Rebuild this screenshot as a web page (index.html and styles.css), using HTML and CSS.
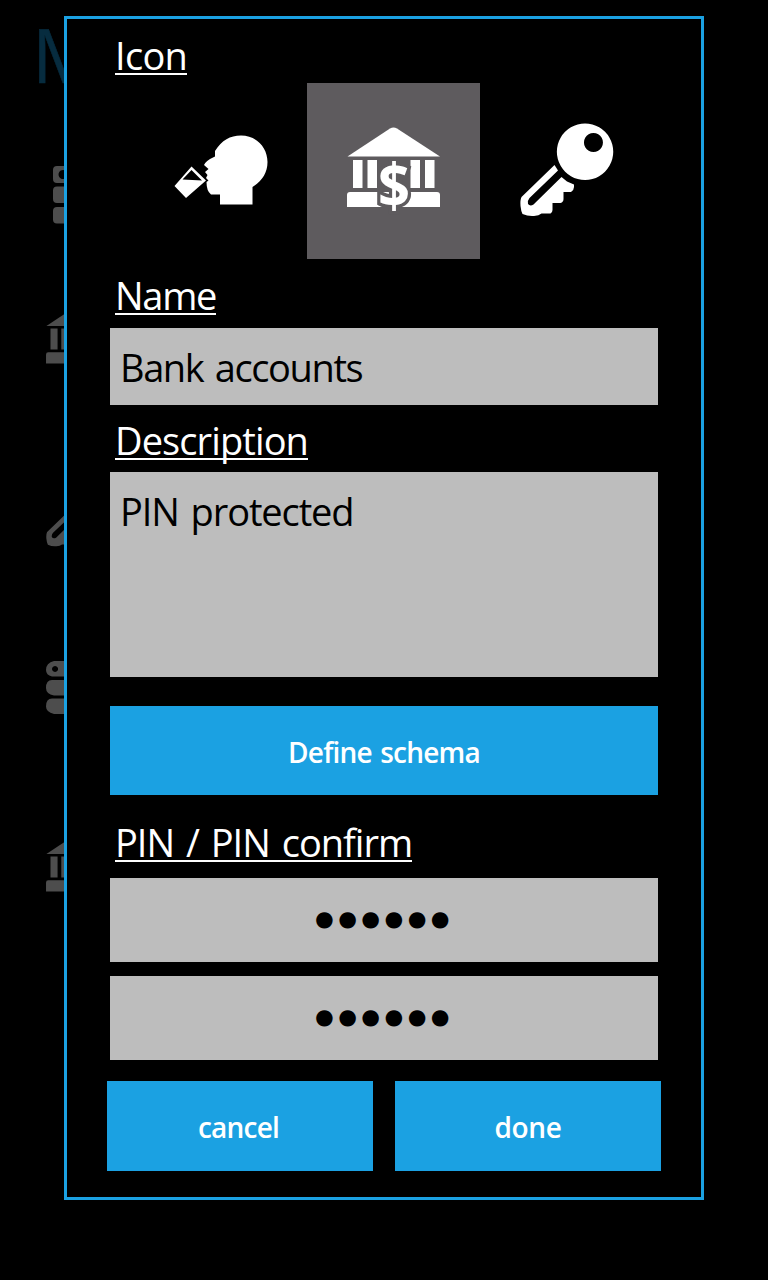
FILE: index.html
```html
<!DOCTYPE html>
<html lang="en">

<head>
    <meta charset="utf-8">
    <title>Edit category</title>
    <link rel="stylesheet" href="styles.css">
</head>

<body>

<!-- shapes used by the list and by the dialog -->
<svg class="defs" width="0" height="0">
    <symbol id="bank" viewBox="0 0 94 86">
        <path d="M.5 29.5 L43 1.5 Q46.500 -.5 50 1.500 L93 29.500 Z"/>
        <path d="M6 33h9.500v28H6z M20.500 33H30v28h-9.500z M63.500 33H73v28h-9.500z M78 33h9.500v28H78z"/>
        <path d="M0 80 V68 Q0 65 3 65 H90 Q93 65 93 68 V80 Z"/>
    </symbol>
    <symbol id="key" viewBox="0 0 94 94">
        <path fill-rule="evenodd" d="M65 0.500 a28.200 28.200 0 1 0 .1 0z M73.500 10 a9.500 9.500 0 1 1 -.1 0z"/>
        <path d="M34.500 42 L1.500 74 Q0 77 .5 83 Q1 88 2.500 91 Q8 93.500 14 93 Q19 92.500 21.500 90.500 H30.500 Q32.500 89 32.500 87 V80 H40.500 Q43.500 79 43.500 76 V69 H51 Q54 67 54 64 V61.500 L47 58.500 L41.500 54 L13.500 81.500 Q10 83.500 8 81 Q7 78 9.500 75 L38 47.500 Z"/>
    </symbol>
</svg>

<main class="page">
    <h1 class="page-title">M</h1>
    <svg class="list-icon people" viewBox="0 0 40 58"><path fill-rule="evenodd" d="M4 0H30V17H4Q0 17 0 13V4Q0 0 4 0z M10 4a4.500 4.500 0 1 0 .1 0z M4 20.500H30V37H4Q0 37 0 33V24.500Q0 20.500 4 20.500z M4 41H30V57.500H4Q0 57.500 0 53.500V45Q0 41 4 41z"/></svg>
    <svg class="list-icon bank1"><use href="#bank"/></svg>
    <svg class="list-icon key1"><use href="#key"/></svg>
    <svg class="list-icon people2" viewBox="0 0 40 54"><path fill-rule="evenodd" d="M8 0H30V15.500H6Q0 14 0 9Q0 2 8 0z M9 5a3 3 0 1 0 .1 0z M6 19H30V34.500H8Q0 33 0 27Q0 19 6 19z M6 37.500H30V53H8Q0 51 0 45.500Q0 37.500 6 37.500z"/></svg>
    <svg class="list-icon bank2"><use href="#bank"/></svg>
</main>

<form class="dialog">
    <label class="label icon-label"><span>Icon</span></label>
    <div class="icons">
        <div class="tile">
            <svg width="94" height="70" viewBox="0 0 94 70">
                <path d="M32 69.500 V59.500 H23 Q18.500 56 18.500 47 L20.500 45.500 L18 43 L19.500 40 L17 37 L20.500 34 L16 30 Q18 25.500 27 21.500 V16 C34 5 42 .5 53 .5 C69 .5 79.500 13 79.500 27 C79.500 38 74 46 64.500 52 V69.500 Z" transform="translate(14)"/>
                <path fill-rule="evenodd" d="M17.500 31.500 L32 45.500 L12 63 L.5 51 Z M17.500 35 L8.500 44.500 L28 45.500 Z"/>
            </svg>
        </div>
        <div class="tile selected">
            <svg class="bank-icon" width="94" height="87" viewBox="0 0 94 87">
                <use href="#bank" width="94" height="86"/>
                <text class="dollar" x="47" y="79.500" textLength="32" lengthAdjust="spacingAndGlyphs">$</text>
            </svg>
        </div>
        <div class="tile"><svg width="94" height="94"><use href="#key"/></svg></div>
    </div>

    <label class="label name-label"><span>Name</span></label>
    <div class="field name">Bank accounts</div>

    <label class="label desc-label"><span>Description</span></label>
    <div class="field desc">PIN protected</div>

    <button type="button" class="btn schema">Define schema</button>

    <label class="label pin-label"><span>PIN / PIN confirm</span></label>
    <div class="field pin">●●●●●●</div>
    <div class="field pin">●●●●●●</div>

    <div class="actions">
        <button type="button" class="btn cancel">cancel</button>
        <button type="button" class="btn done">done</button>
    </div>
</form>

</body>
</html>
```
FILE: styles.css
```css
* {
    box-sizing: border-box;
}

body {
    margin: 0;
    background: black;
    color: white;
    font-family: "Open Sans", "Noto Sans", sans-serif;
    height: 1280px;
    overflow: hidden;
}
.defs {
    position: absolute;
}

/* dimmed list behind the dialog */
.page {
    width: 66px;
    height: 1280px;
    overflow: hidden;
    display: flex;
    flex-direction: column;
    padding-left: 46px;
    fill: #4d4d4d;
}
.page-title {
    margin: 3px 0 0 -14px;
    height: 163px;
    font-size: 75px;
    font-weight: 400;
    line-height: 102px;
    color: #072c3f;
    -webkit-text-stroke: 0.6px #072c3f;
}
.list-icon {
    flex: none;
    overflow: visible;
}
.people {
    width: 40px;
    height: 58px;
    margin-left: 7px;
}
.bank1, .bank2 {
    width: 70px;
    height: 64px;
}
.bank1 {
    margin-top: 80px;
}
.key1 {
    width: 70px;
    height: 70px;
    margin-top: 109px;
}
.people2 {
    width: 40px;
    height: 54px;
    margin-top: 114px;
}
.bank2 {
    margin-top: 117px;
}

.dialog {
    position: absolute;
    left: 64px;
    top: 16px;
    width: 640px;
    height: 1184px;
    border: 3px solid #1ba1e2;
    background: black;
    padding: 0 43px;
}

.label {
    display: block;
    height: 64px;
    padding-left: 6px;
    font-size: 38px;
    line-height: 50px;
    white-space: nowrap;
}
.label span {
    display: inline-block;
    height: 45px;
    border-bottom: 2px solid white;
    margin-left: -1px;
}
.icon-label {
    padding-top: 11px;
    letter-spacing: -0.7px;
}
.name-label {
    height: 69px;
    padding-top: 11px;
    letter-spacing: -1.3px;
}
.desc-label {
    height: 67px;
    padding-top: 10px;
    letter-spacing: -0.9px;
}
.pin-label {
    height: 83px;
    padding-top: 22px;
    letter-spacing: -1px;
    word-spacing: 3px;
}

.icons {
    display: flex;
    height: 176px;
    padding-left: 24px;
}
.tile {
    width: 173px;
    height: 176px;
    display: flex;
    align-items: center;
    justify-content: center;
    padding-bottom: 2px;
    fill: white;
}
.selected {
    background: #5e5b5e;
    padding-bottom: 1px;
}
.bank-icon {
    overflow: visible;
}
.dollar {
    font-size: 60px;
    font-weight: 700;
    text-anchor: middle;
    stroke: #5e5b5e;
    stroke-width: 7px;
    paint-order: stroke;
}

.field {
    width: 548px;
    background: #bdbdbd;
    color: black;
    font-size: 38px;
    line-height: 50px;
    padding: 14px 10px;
    white-space: nowrap;
}
.name {
    height: 77px;
    letter-spacing: -1.4px;
    word-spacing: 3px;
}
.desc {
    height: 205px;
    letter-spacing: -1.1px;
    word-spacing: 3px;
}
.pin {
    height: 84px;
    margin-bottom: 14px;
    padding: 0 0 0 1px;
    text-align: center;
    font-family: "DejaVu Sans", sans-serif;
    font-size: 21.5px;
    line-height: 82px;
    letter-spacing: 4.4px;
}

.btn {
    display: block;
    height: 90px;
    padding: 2px 0 0;
    border: none;
    background: #1ba1e2;
    color: white;
    font-family: "Open Sans", "Noto Sans", sans-serif;
    font-size: 28px;
    font-weight: 600;
}
.schema {
    width: 548px;
    height: 89px;
    margin-top: 29px;
    letter-spacing: -0.8px;
    word-spacing: 2px;
}
.actions {
    display: flex;
    gap: 22px;
    margin: 21px -3px 0;
}
.actions .btn {
    width: 266px;
    padding-top: 2px;
}
.actions .cancel {
    letter-spacing: -0.8px;
    padding-right: 3px;
}
.actions .done {
    letter-spacing: -0.3px;
}
```
